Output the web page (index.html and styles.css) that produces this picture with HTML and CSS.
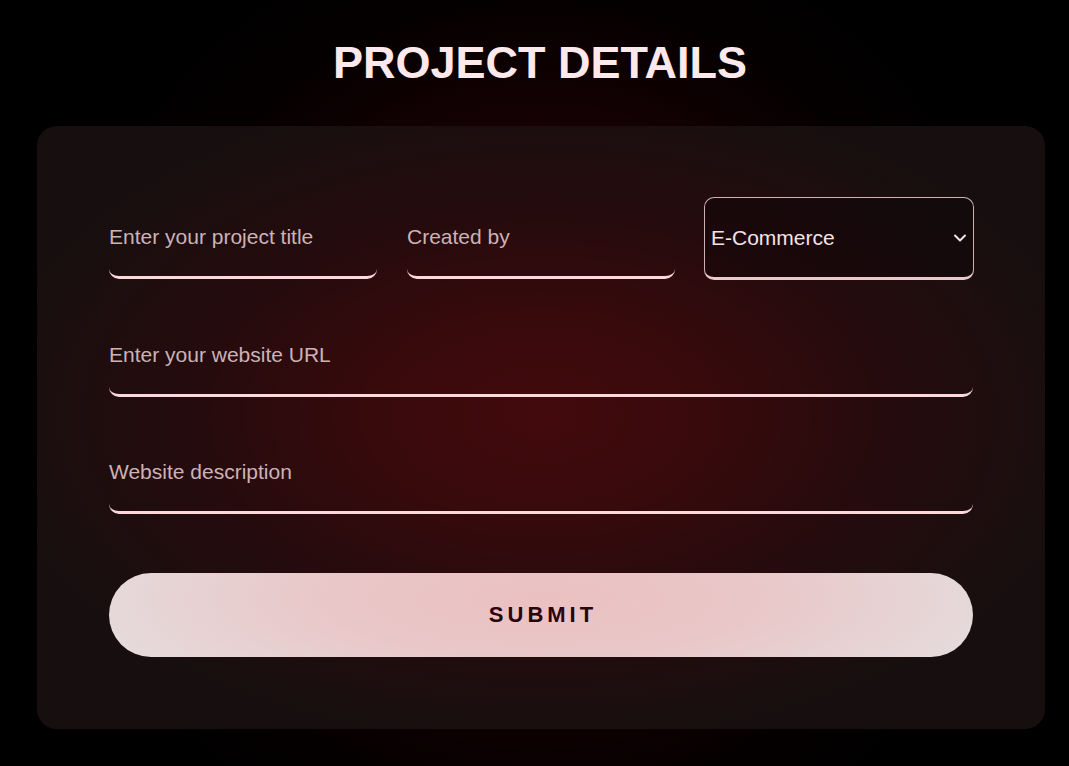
FILE: index.html
```html
<!DOCTYPE html>
<html>
<head>
<meta charset="utf-8">
<link rel="stylesheet" href="styles.css">
</head>
<body>
<div class="page">
  <h1 class="title">PROJECT DETAILS</h1>
  <form class="card">
    <div class="row row-3">
      <div class="field"><span class="ph">Enter your project title</span></div>
      <div class="field"><span class="ph">Created by</span></div>
      <div class="select">
        <span class="sel-text">E-Commerce</span>
        <svg class="chev" width="14" height="10" viewBox="0 0 14 10"><path d="M2 2.5 L7 7.5 L12 2.5" fill="none" stroke="#f5e4e6" stroke-width="2" stroke-linecap="round" stroke-linejoin="round"/></svg>
      </div>
    </div>
    <div class="row">
      <div class="field"><span class="ph">Enter your website URL</span></div>
    </div>
    <div class="row">
      <div class="field"><span class="ph">Website description</span></div>
    </div>
    <button type="button" class="submit">SUBMIT</button>
  </form>
</div>
</body>
</html>
```

FILE: styles.css
```css
html, body {
  margin: 0;
  padding: 0;
  height: 100%;
}
body {
  background: radial-gradient(circle at 540px 400px, #2e0206 0%, #1a0104 35%, #050000 60%, #000 75%);
  font-family: "Liberation Sans", Arial, sans-serif;
  overflow: hidden;
}
.page {
  width: 1069px;
  height: 766px;
  display: flex;
  flex-direction: column;
}
.title {
  margin: 38px 0 0 0;
  height: 50px;
  line-height: 50px;
  text-align: center;
  font-size: 45px;
  font-weight: bold;
  color: #fde9ec;
  padding-left: 11px;
}
.card {
  margin: 38px 0 0 37px;
  width: 1008px;
  box-sizing: border-box;
  padding: 71px 72px 72px 72px;
  border-radius: 20px;
  background: radial-gradient(ellipse 560px 330px at 50% 48%, #430a0d 0%, #380a0c 30%, #260b0d 60%, #170f0f 100%);
  display: flex;
  flex-direction: column;
}
.row {
  display: flex;
  gap: 30px;
  margin-bottom: 35px;
}
.row-3 .field {
  flex: 0 0 268px;
}
.row-3 .select {
  flex: 0 0 270px;
  margin-left: -1px;
}
.field {
  flex: 1;
  height: 82px;
  box-sizing: border-box;
  border-bottom: 3px solid #fcd8da;
  border-radius: 0 0 10px 10px;
  display: flex;
  align-items: center;
}
.ph {
  font-size: 21px;
  color: #cdb2b6;
  margin-top: 1px;
}
.select {
  height: 83px;
  box-sizing: border-box;
  border: 1px solid #cfb1b5;
  border-bottom: 3px solid #e9c9cc;
  border-radius: 10px;
  display: flex;
  align-items: center;
  justify-content: space-between;
  padding: 0 6px 0 6px;
  background: rgba(10, 4, 5, 0.35);
}
.sel-text {
  font-size: 21px;
  color: #f6e2e4;
}
.chev {
  margin-right: 0px;
}
.submit {
  margin-top: 24px;
  height: 84px;
  border: none;
  border-radius: 42px;
  background: radial-gradient(ellipse 480px 130px at 50% 30%, #ebc0c1 0%, #e9c7c8 45%, #e5dcdd 100%);
  font-family: "Liberation Sans", Arial, sans-serif;
  font-size: 22px;
  font-weight: bold;
  letter-spacing: 4px;
  color: #2a040a;
  padding: 0 0 0 4px;
}
```
